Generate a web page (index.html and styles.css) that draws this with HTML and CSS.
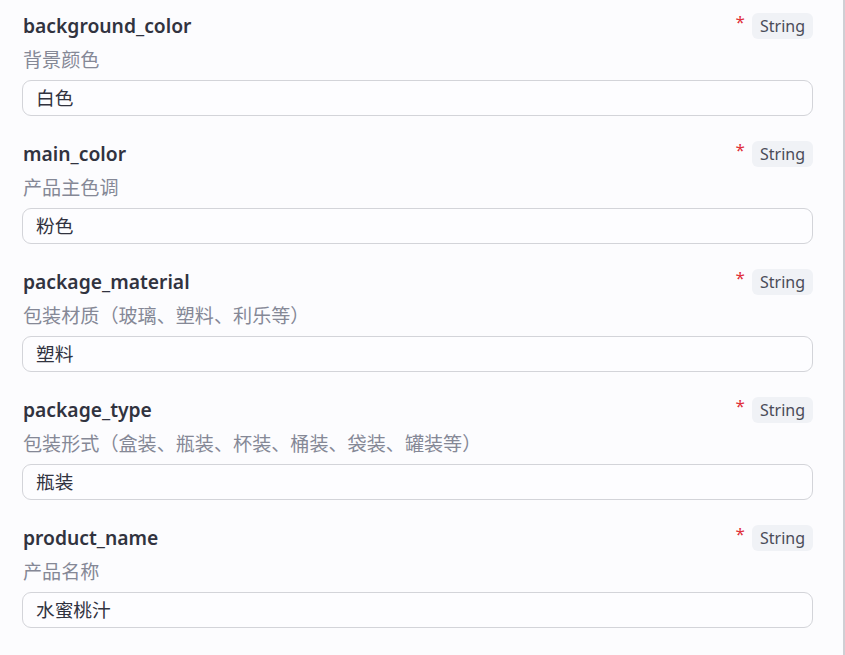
FILE: index.html
```html
<!DOCTYPE html>
<html lang="zh">
<head>
<meta charset="utf-8">
<link rel="stylesheet" href="styles.css">
</head>
<body>
<div class="page">
  <div class="form">
    <div class="field">
      <div class="head">
        <span class="name">background_color</span>
        <span class="meta"><span class="req">*</span><span class="tag">String</span></span>
      </div>
      <div class="desc">背景颜色</div>
      <div class="input">白色</div>
    </div>
    <div class="field">
      <div class="head">
        <span class="name">main_color</span>
        <span class="meta"><span class="req">*</span><span class="tag">String</span></span>
      </div>
      <div class="desc">产品主色调</div>
      <div class="input">粉色</div>
    </div>
    <div class="field">
      <div class="head">
        <span class="name">package_material</span>
        <span class="meta"><span class="req">*</span><span class="tag">String</span></span>
      </div>
      <div class="desc">包装材质（玻璃、塑料、利乐等）</div>
      <div class="input">塑料</div>
    </div>
    <div class="field">
      <div class="head">
        <span class="name">package_type</span>
        <span class="meta"><span class="req">*</span><span class="tag">String</span></span>
      </div>
      <div class="desc">包装形式（盒装、瓶装、杯装、桶装、袋装、罐装等）</div>
      <div class="input">瓶装</div>
    </div>
    <div class="field">
      <div class="head">
        <span class="name">product_name</span>
        <span class="meta"><span class="req">*</span><span class="tag">String</span></span>
      </div>
      <div class="desc">产品名称</div>
      <div class="input">水蜜桃汁</div>
    </div>
  </div>
</div>
</body>
</html>
```

FILE: styles.css
```css
html, body {
  margin: 0;
  padding: 0;
  background: #fcfcfe;
}
body {
  font-family: "Noto Sans", "Noto Sans CJK SC", sans-serif;
  color: #31333f;
}
.page {
  width: 843px;
  height: 655px;
  border-right: 2px solid #cfcfd4;
  box-sizing: content-box;
  overflow: hidden;
}
.form {
  width: 791px;
  margin-left: 22px;
  padding-top: 12px;
  display: flex;
  flex-direction: column;
  gap: 24px;
}
.field {
  display: flex;
  flex-direction: column;
}
.head {
  display: flex;
  justify-content: space-between;
  align-items: center;
  height: 28px;
}
.name {
  font-weight: 600;
  font-size: 19.3px;
  line-height: 28px;
  padding-left: 1px;
}
.meta {
  display: flex;
  align-items: center;
  gap: 7px;
}
.req {
  color: #e0303a;
  font-size: 17px;
  line-height: 18px;
  position: relative;
  top: -4px;
}
.tag {
  background: #f0f2f6;
  border-radius: 6px;
  height: 26px;
  line-height: 26px;
  padding: 0 8px;
  font-size: 16px;
  color: #4a4c58;
}
.desc {
  font-size: 19.1px;
  line-height: 28px;
  height: 28px;
  color: #858896;
  margin-top: 6px;
  padding-left: 1px;
}
.input {
  margin-top: 6px;
  height: 36px;
  box-sizing: border-box;
  border: 1px solid #d3d4d9;
  border-radius: 9px;
  background: #fdfdff;
  padding: 0 13px;
  font-size: 18.7px;
  line-height: 34px;
  color: #31333f;
}
```
